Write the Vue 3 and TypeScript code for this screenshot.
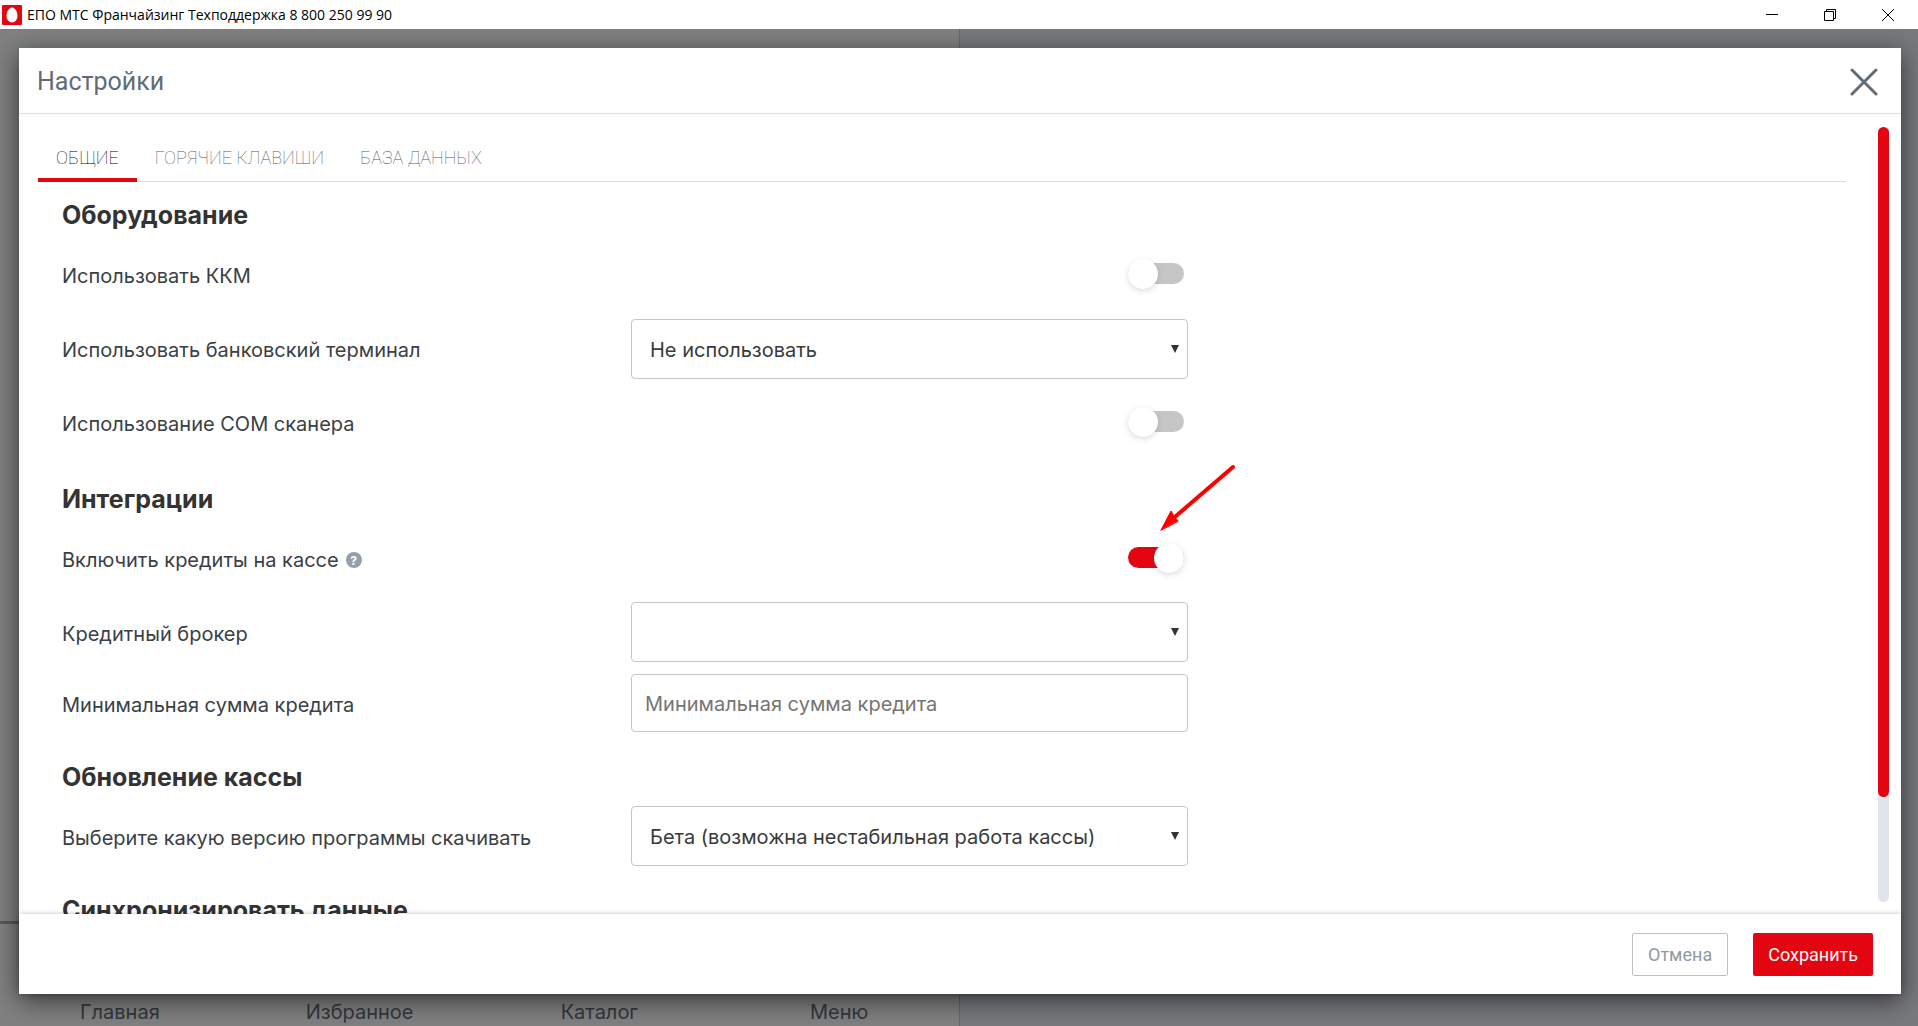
<script setup lang="ts">
import { ref } from 'vue'

const tabs = ['Общие', 'Горячие клавиши', 'База данных']
const activeTab = ref(0)
const navItems = ['Главная', 'Избранное', 'Каталог', 'Меню']

const useKkm = ref(false)
const useComScanner = ref(false)
const creditsEnabled = ref(true)
const terminal = ref('none')
const broker = ref('')
const minSum = ref('')
const channel = ref('beta')
</script>

<template>
  <div class="window">
    <header class="titlebar">
      <svg class="app-icon" viewBox="0 0 20 20" aria-hidden="true">
        <rect width="20" height="20" rx="1" fill="#e30611" />
        <path d="M10 2.500c3 0 5.500 4.600 5.500 8.300 0 3.800-2.300 6.700-5.500 6.700s-5.500-2.900-5.500-6.700C4.500 7.100 7 2.500 10 2.500z" fill="#fff" />
      </svg>
      <span class="app-title">ЕПО МТС Франчайзинг Техподдержка 8 800 250 99 90</span>
      <div class="window-buttons">
        <button type="button" aria-label="Свернуть">
          <svg viewBox="0 0 12 12"><path d="M0 5.500h12" /></svg>
        </button>
        <button type="button" aria-label="Восстановить">
          <svg viewBox="0 0 12 12"><path d="M.5 2.500h9v9h-9zM2.500 2.500v-2h9v9h-2" /></svg>
        </button>
        <button type="button" aria-label="Закрыть окно">
          <svg viewBox="0 0 12 12"><path d="M0 0l12 12M12 0L0 12" /></svg>
        </button>
      </div>
    </header>

    <div class="stage">
      <div class="backdrop">
        <div class="catalog">
          <nav class="bottom-nav">
            <a v-for="item in navItems" :key="item" href="#">{{ item }}</a>
          </nav>
        </div>
        <div class="receipt"></div>
      </div>

      <section class="modal" role="dialog" aria-labelledby="modal-title">
        <header class="modal-head">
          <h1 id="modal-title">Настройки</h1>
          <button type="button" class="close" aria-label="Закрыть">
            <svg viewBox="0 0 28 28"><path d="M2 2l24 24M26 2L2 26" /></svg>
          </button>
        </header>

        <div class="modal-body">
          <div class="content">
            <div class="tabs" role="tablist">
              <button
                v-for="(tab, i) in tabs"
                :key="tab"
                type="button"
                role="tab"
                :aria-selected="i === activeTab"
                :class="{ active: i === activeTab }"
                @click="activeTab = i"
              >{{ tab }}</button>
            </div>

            <form class="settings" @submit.prevent>
              <h2>Оборудование</h2>
              <div class="row">
                <label for="kkm">Использовать ККМ</label>
                <div class="control"><input id="kkm" v-model="useKkm" type="checkbox" class="switch" /></div>
              </div>
              <div class="row">
                <label for="terminal">Использовать банковский терминал</label>
                <div class="control select">
                  <select id="terminal" v-model="terminal">
                    <option value="none">Не использовать</option>
                  </select>
                </div>
              </div>
              <div class="row">
                <label for="scanner">Использование COM сканера</label>
                <div class="control"><input id="scanner" v-model="useComScanner" type="checkbox" class="switch" /></div>
              </div>

              <h2>Интеграции</h2>
              <div class="row">
                <label for="credits">Включить кредиты на кассе <span class="help">?</span></label>
                <div class="control">
                  <input id="credits" v-model="creditsEnabled" type="checkbox" class="switch" />
                  <svg class="pointer" viewBox="0 0 76 68" aria-hidden="true">
                    <path d="M73 3L16 52" />
                    <path class="tip" d="M1 66L11 47l3 5 4 5z" />
                  </svg>
                </div>
              </div>
              <div class="row compact">
                <label for="broker">Кредитный брокер</label>
                <div class="control select">
                  <select id="broker" v-model="broker">
                    <option value=""></option>
                  </select>
                </div>
              </div>
              <div class="row compact">
                <label for="min-sum">Минимальная сумма кредита</label>
                <div class="control">
                  <input id="min-sum" v-model="minSum" type="text" class="text" placeholder="Минимальная сумма кредита" />
                </div>
              </div>

              <h2>Обновление кассы</h2>
              <div class="row compact">
                <label for="channel">Выберите какую версию программы скачивать</label>
                <div class="control select">
                  <select id="channel" v-model="channel">
                    <option value="beta">Бета (возможна нестабильная работа кассы)</option>
                  </select>
                </div>
              </div>

              <h2>Синхронизировать данные</h2>
            </form>
          </div>
          <div class="scrollbar"><div class="thumb"></div></div>
        </div>

        <footer class="modal-foot">
          <button type="button" class="cancel">Отмена</button>
          <button type="button" class="save">Сохранить</button>
        </footer>
      </section>
    </div>
  </div>
</template>

<style>
body {
  margin: 0;
}
</style>

<style scoped>
* {
  box-sizing: border-box;
}

.window {
  display: flex;
  flex-direction: column;
  height: 100vh;
  font-family: Inter, Roboto, "Liberation Sans", sans-serif;
  font-size: 20px;
  color: #3a4046;
}

button {
  margin: 0;
  padding: 0;
  border: 0;
  background: none;
  font-family: inherit;
  cursor: pointer;
}

.titlebar {
  display: flex;
  align-items: center;
  flex: none;
  height: 29px;
  padding: 0 1px 0 2px;
  background: #fff;
  color: #000;
  font-family: "Open Sans", "Noto Sans", sans-serif;
  font-size: 14px;
}

.app-icon {
  width: 20px;
  height: 20px;
  margin-right: 5px;
}

.window-buttons {
  display: flex;
  margin-left: auto;
}

.window-buttons button {
  display: flex;
  align-items: center;
  justify-content: center;
  width: 58px;
  height: 28px;
}

.window-buttons svg {
  width: 12px;
  height: 12px;
  fill: none;
  stroke: #000;
  overflow: visible;
}

.stage {
  display: grid;
  flex: 1;
  min-height: 0;
  overflow: hidden;
}

.backdrop,
.modal {
  grid-area: 1 / 1;
  min-height: 0;
}

.backdrop {
  display: grid;
  grid-template-columns: 1fr 1fr;
}

.catalog {
  display: flex;
  flex-direction: column;
  justify-content: flex-end;
  background: #808080;
}

.receipt {
  border-left: 1px solid #67686b;
  background: #78797b;
}

.bottom-nav {
  display: grid;
  grid-template-columns: repeat(4, 1fr);
  align-items: end;
  height: 105px;
  border-top: 3px solid #57585b;
}

.bottom-nav a {
  line-height: 28px;
  text-align: center;
  text-decoration: none;
  color: #32373d;
}

.modal {
  position: relative;
  display: flex;
  flex-direction: column;
  margin: 19px 17px 32px 19px;
  background: #fff;
  box-shadow: 0 6px 24px rgba(0, 0, 0, 0.6);
}

.modal-head {
  display: flex;
  align-items: center;
  justify-content: space-between;
  flex: none;
  height: 66px;
  padding: 2px 23px 0 18px;
  border-bottom: 1px solid #e0e0e0;
}

h1 {
  margin: 0;
  font-family: Roboto, sans-serif;
  font-size: 25px;
  font-weight: 400;
  color: #626c77;
}

.close {
  display: flex;
}

.close svg {
  width: 28px;
  height: 28px;
  fill: none;
  stroke: #626c77;
  stroke-width: 3;
  stroke-linecap: round;
}

.modal-body {
  display: flex;
  flex: 1;
  min-height: 0;
}

.content {
  flex: 1;
  padding: 24px 32px 0 19px;
  overflow: hidden auto;
  scrollbar-width: none;
}

.tabs {
  display: flex;
  border-bottom: 1px solid #dcdcdc;
}

.tabs button {
  height: 44px;
  margin-bottom: -1px;
  padding: 0 18px 1px;
  border-bottom: 4px solid transparent;
  font-family: Roboto, sans-serif;
  font-size: 18px;
  font-weight: 100;
  text-transform: uppercase;
  color: #4e5863;
}

.tabs .active {
  border-color: #e30611;
  color: #000;
}

.settings {
  padding: 17px 24px 0;
}

h2 {
  margin: 23px 0 7px;
  font-size: 25px;
  font-weight: 700;
  line-height: 32px;
  color: #333;
}

h2:first-child {
  margin-top: 0;
}

.row {
  display: grid;
  grid-template-columns: 569px 557px;
  align-items: center;
  height: 74px;
}

.row label {
  display: flex;
  align-items: center;
  padding-top: 2px;
}

.compact {
  height: 71px;
}

.compact label {
  padding-top: 4px;
}

.help {
  display: grid;
  place-items: center;
  width: 16px;
  height: 16px;
  margin-left: 7px;
  border-radius: 50%;
  background: #969fa8;
  color: #fff;
  font-size: 12px;
  font-weight: 700;
}

.control {
  position: relative;
  display: flex;
  justify-content: flex-end;
}

select,
.text {
  width: 100%;
  height: 60px;
  margin: 0;
  border: 1px solid #c6c6c6;
  border-radius: 4px;
  background: #fff;
  color: #3a3a3a;
  font: inherit;
  appearance: none;
}

select {
  padding: 2px 40px 0 18px;
}

.text {
  height: 58px;
  padding: 2px 13px 0;
}

.text::placeholder {
  color: #757575;
  opacity: 1;
}

.select::after {
  content: "";
  position: absolute;
  top: 26px;
  right: 9px;
  border: 4px solid transparent;
  border-top: 8px solid #333;
  border-bottom: 0;
  pointer-events: none;
}

.switch {
  display: flex;
  align-items: center;
  width: 56px;
  height: 21px;
  margin: 0 4px 3px 0;
  border-radius: 11px;
  background: #c6c6c6;
  appearance: none;
}

.switch::before {
  content: "";
  width: 30px;
  height: 30px;
  flex: none;
  border-radius: 50%;
  background: #fff;
  box-shadow: 0 2px 6px rgba(60, 90, 110, 0.2);
}

.switch:checked {
  justify-content: flex-end;
  background: #e30611;
}

.pointer {
  position: absolute;
  right: -48px;
  bottom: 39px;
  width: 76px;
  height: 68px;
  fill: none;
  stroke: #f00;
  stroke-width: 4;
  stroke-linecap: round;
}

.pointer .tip {
  fill: #f00;
  stroke-width: 1;
}

.scrollbar {
  flex: none;
  width: 11px;
  margin: 13px 12px 12px 0;
  border-radius: 6px;
  background: #e2e5eb;
}

.thumb {
  height: calc(100% - 105px);
  border-radius: 6px;
  background: #e30611;
}

.modal-foot {
  position: relative;
  display: flex;
  align-items: center;
  justify-content: flex-end;
  gap: 25px;
  flex: none;
  height: 80px;
  padding-right: 28px;
  background: #fff;
  box-shadow: 0 0 5px rgba(0, 0, 0, 0.25);
}

.modal-foot button {
  height: 43px;
  padding: 0 15px;
  border-radius: 2px;
  font-family: Roboto, sans-serif;
  font-size: 18px;
}

.modal-foot .cancel {
  border: 1px solid #bbc1c7;
  color: #9198a0;
}

.modal-foot .save {
  background: #e30611;
  color: #fff;
}
</style>
